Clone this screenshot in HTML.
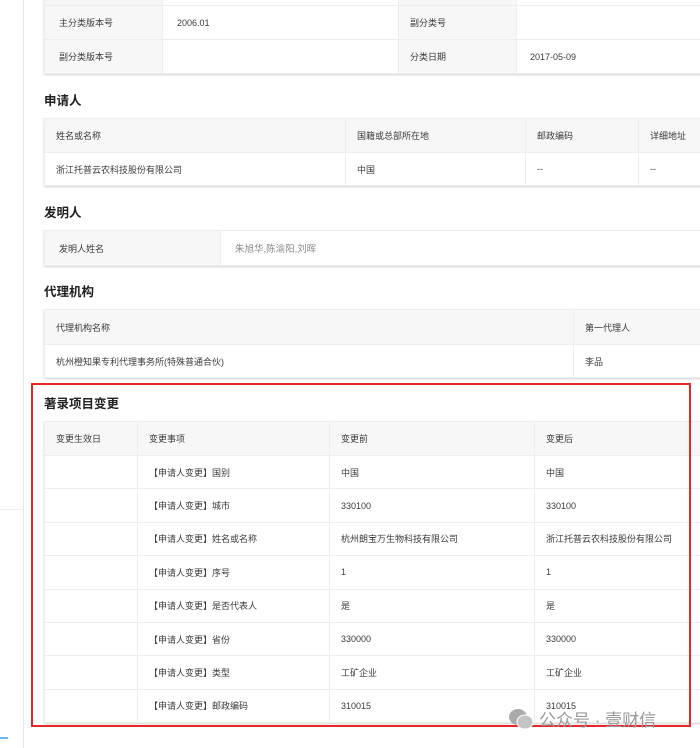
<!DOCTYPE html>
<html><head><meta charset="utf-8"><style>
*{margin:0;padding:0;box-sizing:border-box}
body{width:700px;height:748px;overflow:hidden;background:#fff;font-family:"Liberation Sans","Noto Sans CJK SC",sans-serif;font-size:9px;color:#3a3a3a;position:relative}
.side{position:absolute;left:0;top:0;width:24px;height:748px;border-right:1px solid #e6e6e6}
.abs{position:absolute}
table{border-collapse:collapse;position:absolute;table-layout:fixed;box-shadow:0 1px 2px rgba(0,0,0,.18)}
td{border:1px solid #eee;padding-left:11px;white-space:nowrap;overflow:hidden}
.g{background:#f7f7f7}
h3{position:absolute;left:44px;font-size:12.5px;font-weight:bold;color:#222}
</style></head><body>
<div class="side"></div>
<div class="abs" style="left:0;top:509px;width:24px;border-top:1px solid #eee"></div>
<div class="abs" style="left:0;top:737px;width:8px;height:2px;background:#6cb6f0"></div>

<table style="left:44px;top:-33px;width:680px">
<colgroup><col style="width:118px"><col style="width:236px"><col style="width:118px"><col></colgroup>
<tr style="height:38px"><td class="g"></td><td></td><td class="g"></td><td></td></tr>
<tr style="height:34px"><td class="g" style="padding-left:14px">主分类版本号</td><td style="padding-left:14px">2006.01</td><td class="g">副分类号</td><td></td></tr>
<tr style="height:34px"><td class="g" style="padding-left:14px">副分类版本号</td><td></td><td class="g">分类日期</td><td style="padding-left:13px">2017-05-09</td></tr>
</table>

<h3 style="top:90px">申请人</h3>
<table style="left:44px;top:118px;width:680px">
<colgroup><col style="width:301px"><col style="width:180px"><col style="width:113px"><col></colgroup>
<tr class="g" style="height:34px"><td>姓名或名称</td><td>国籍或总部所在地</td><td>邮政编码</td><td>详细地址</td></tr>
<tr style="height:33px"><td>浙江托普云农科技股份有限公司</td><td>中国</td><td>--</td><td>--</td></tr>
</table>

<h3 style="top:202px">发明人</h3>
<table style="left:44px;top:230px;width:680px">
<colgroup><col style="width:176px"><col></colgroup>
<tr style="height:35px"><td class="g" style="padding-left:14px">发明人姓名</td><td style="padding-left:14px;color:#888;font-size:9.5px">朱旭华,陈渝阳,刘晖</td></tr>
</table>

<h3 style="top:281px">代理机构</h3>
<table style="left:44px;top:309px;width:680px">
<colgroup><col style="width:529px"><col></colgroup>
<tr class="g" style="height:35px"><td>代理机构名称</td><td>第一代理人</td></tr>
<tr style="height:33px"><td>杭州橙知果专利代理事务所(特殊普通合伙)</td><td>李品</td></tr>
</table>

<div class="abs" style="left:31px;top:383px;width:660px;height:344px;border:2px solid #e8262a;z-index:2"></div>
<h3 style="top:393px">著录项目变更</h3>
<table style="left:44px;top:421px;width:680px">
<colgroup><col style="width:93px"><col style="width:192px"><col style="width:205px"><col></colgroup>
<tr class="g" style="height:34px"><td>变更生效日</td><td>变更事项</td><td>变更前</td><td>变更后</td></tr>
<tr style="height:33.4px"><td></td><td>【申请人变更】国别</td><td>中国</td><td>中国</td></tr>
<tr style="height:33.4px"><td></td><td>【申请人变更】城市</td><td>330100</td><td>330100</td></tr>
<tr style="height:33.4px"><td></td><td>【申请人变更】姓名或名称</td><td>杭州朗宝万生物科技有限公司</td><td>浙江托普云农科技股份有限公司</td></tr>
<tr style="height:33.4px"><td></td><td>【申请人变更】序号</td><td>1</td><td>1</td></tr>
<tr style="height:33.4px"><td></td><td>【申请人变更】是否代表人</td><td>是</td><td>是</td></tr>
<tr style="height:33.4px"><td></td><td>【申请人变更】省份</td><td>330000</td><td>330000</td></tr>
<tr style="height:33.4px"><td></td><td>【申请人变更】类型</td><td>工矿企业</td><td>工矿企业</td></tr>
<tr style="height:33.4px"><td></td><td>【申请人变更】邮政编码</td><td>310015</td><td>310015</td></tr>
</table>

<div class="abs" style="left:508px;top:706px;z-index:3;display:flex;align-items:center;color:#999;font-size:17px">
<svg width="26" height="22" viewBox="0 0 26 22"><ellipse cx="10" cy="9" rx="9" ry="8" fill="#aaa"/><ellipse cx="17" cy="14" rx="8" ry="7" fill="#c4c4c4" stroke="#fff" stroke-width="1"/></svg>
<span style="margin-left:5px">公众号 · 壹财信</span></div>
</body></html>
